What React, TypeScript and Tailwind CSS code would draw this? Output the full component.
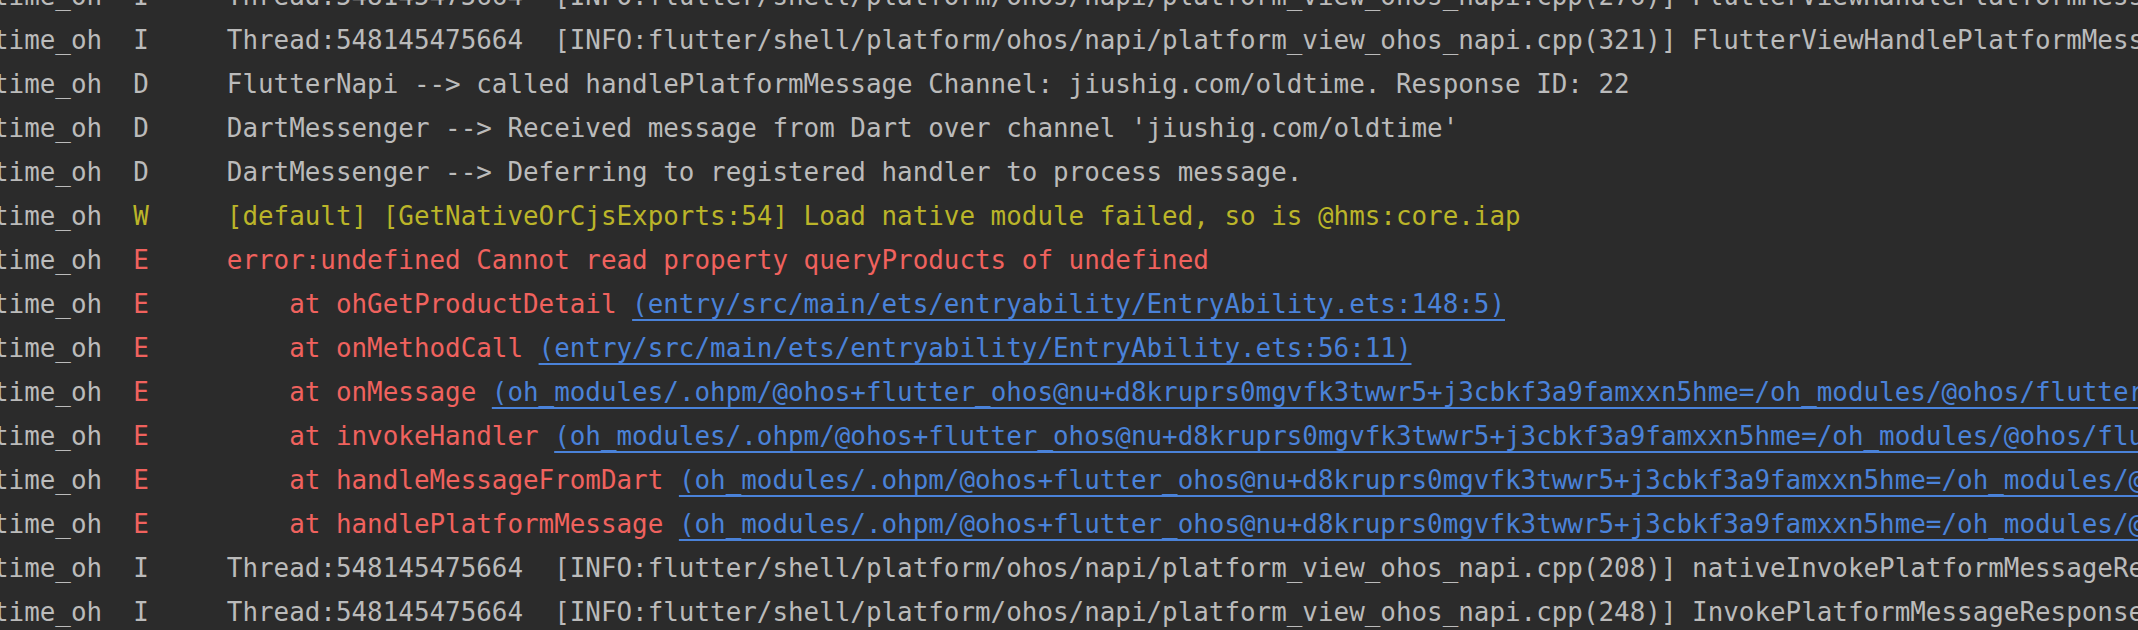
const path =
  'oh_modules/.ohpm/@ohos+flutter_ohos@nu+d8kruprs0mgvfk3twwr5+j3cbkf3a9famxxn5hme=/oh_modules/@ohos/flutter_ohos/src/main/ets/embedding/engine/dart/DartMessenger.ets';

type Level = 'I' | 'D' | 'W' | 'E';

type LogRow = {
  level: Level;
  text: string;
  link?: string;
};

const info = (n: string, msg: string): LogRow => ({
  level: 'I',
  text: `Thread:548145475664  [INFO:flutter/shell/platform/ohos/napi/platform_view_ohos_napi.cpp(${n})] ${msg}`,
});

const rows: LogRow[] = [
  info('276', 'FlutterViewHandlePlatformMessage Channel: jiushig.com/oldtime'),
  info('321', 'FlutterViewHandlePlatformMessage Channel: jiushig.com/oldtime'),
  { level: 'D', text: 'FlutterNapi --> called handlePlatformMessage Channel: jiushig.com/oldtime. Response ID: 22' },
  { level: 'D', text: "DartMessenger --> Received message from Dart over channel 'jiushig.com/oldtime'" },
  { level: 'D', text: 'DartMessenger --> Deferring to registered handler to process message.' },
  { level: 'W', text: '[default] [GetNativeOrCjsExports:54] Load native module failed, so is @hms:core.iap' },
  { level: 'E', text: 'error:undefined Cannot read property queryProducts of undefined' },
  { level: 'E', text: '    at ohGetProductDetail ', link: '(entry/src/main/ets/entryability/EntryAbility.ets:148:5)' },
  { level: 'E', text: '    at onMethodCall ', link: '(entry/src/main/ets/entryability/EntryAbility.ets:56:11)' },
  { level: 'E', text: '    at onMessage ', link: `(${path}:120:14)` },
  { level: 'E', text: '    at invokeHandler ', link: `(${path}:187:29)` },
  { level: 'E', text: '    at handleMessageFromDart ', link: `(${path}:98:12)` },
  { level: 'E', text: '    at handlePlatformMessage ', link: `(${path}:45:5)` },
  info('208', 'nativeInvokePlatformMessageResponseCallback'),
  info('248', 'InvokePlatformMessageResponseCallback'),
];

const levelColor: Record<Level, string> = {
  I: 'text-[#bbbbbb]',
  D: 'text-[#bbbbbb]',
  W: 'text-[#bbb529]',
  E: 'text-[#f0625e]',
};

export default function App() {
  return (
    <div className="h-[630px] w-[2138px] overflow-hidden bg-[#2b2b2b] font-['DejaVu_Sans_Mono',monospace] text-[25.9px]">
      <div className="-mt-[26px] -ml-[7px]">
        {rows.map((row, i) => (
          <div key={i} className="flex h-[44px] items-center whitespace-pre leading-[44px]">
            <span className="text-[#bbbbbb]">{'time_oh  '}</span>
            <span className={levelColor[row.level]}>{row.level.padEnd(6, ' ')}</span>
            <span className={levelColor[row.level]}>{row.text}</span>
            {row.link && (
              <span className="text-[#4a82d9] underline decoration-2 underline-offset-[6px] [text-decoration-skip-ink:none]">
                {row.link}
              </span>
            )}
          </div>
        ))}
      </div>
    </div>
  );
}
